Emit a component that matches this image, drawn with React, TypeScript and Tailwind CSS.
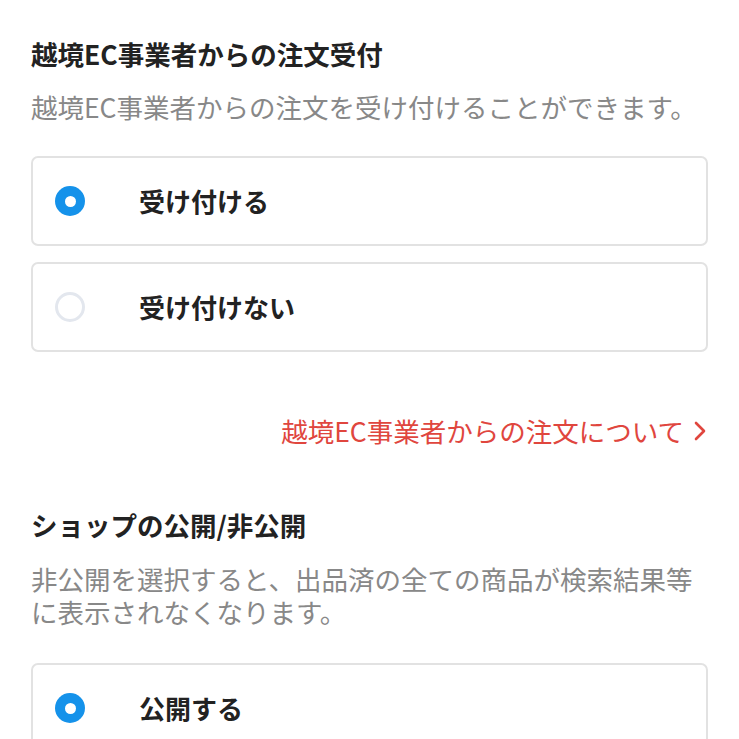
import React from "react";

const font = { fontFamily: '"Noto Sans CJK JP", "Noto Sans", sans-serif' };

function Radio({ checked }: { checked: boolean }) {
  return checked ? (
    <span className="flex h-[30px] w-[30px] shrink-0 items-center justify-center rounded-full bg-[#1592ea]">
      <span className="h-[11px] w-[11px] rounded-full bg-white" />
    </span>
  ) : (
    <span className="h-[30px] w-[30px] shrink-0 rounded-full border-[3px] border-[#e3e7ee] bg-white" />
  );
}

function Option({ label, checked }: { label: string; checked: boolean }) {
  return (
    <div className="flex h-[90px] items-center rounded-[7px] border-2 border-[#e2e2e2] bg-white pl-[22px]">
      <Radio checked={checked} />
      <span className="ml-[54px] text-[26px] font-bold leading-[34px] text-[#222]">{label}</span>
    </div>
  );
}

export default function App() {
  return (
    <div className="h-[739px] overflow-hidden bg-white px-[31px] pt-[36px]" style={font}>
      <h2 className="text-[26.5px] font-bold leading-[36px] text-[#222]">越境EC事業者からの注文受付</h2>
      <p className="mt-[18px] text-[26.5px] leading-[34px] text-[#888]">
        越境EC事業者からの注文を受け付けることができます。
      </p>
      <div className="mt-[32px] flex flex-col gap-[16px]">
        <Option label="受け付ける" checked />
        <Option label="受け付けない" checked={false} />
      </div>
      <div className="mt-[62px] flex items-center justify-end gap-[10px] text-[26.5px] leading-[34px] text-[#e0463e]">
        <span>越境EC事業者からの注文について</span>
        <svg width="12" height="20" viewBox="0 0 12 20" fill="none" className="mr-[2px]">
          <path d="M2 2 L10 10 L2 18" stroke="#e0463e" strokeWidth="2.6" strokeLinecap="round" strokeLinejoin="round" />
        </svg>
      </div>
      <h2 className="mt-[59px] text-[26.5px] font-bold leading-[36px] text-[#222]">ショップの公開/非公開</h2>
      <p className="mt-[19px] text-[26.5px] leading-[33px] text-[#888]">
        非公開を選択すると、出品済の全ての商品が検索結果等
        <br />
        に表示されなくなります。
      </p>
      <div className="mt-[35px] flex flex-col gap-[16px]">
        <Option label="公開する" checked />
      </div>
    </div>
  );
}
